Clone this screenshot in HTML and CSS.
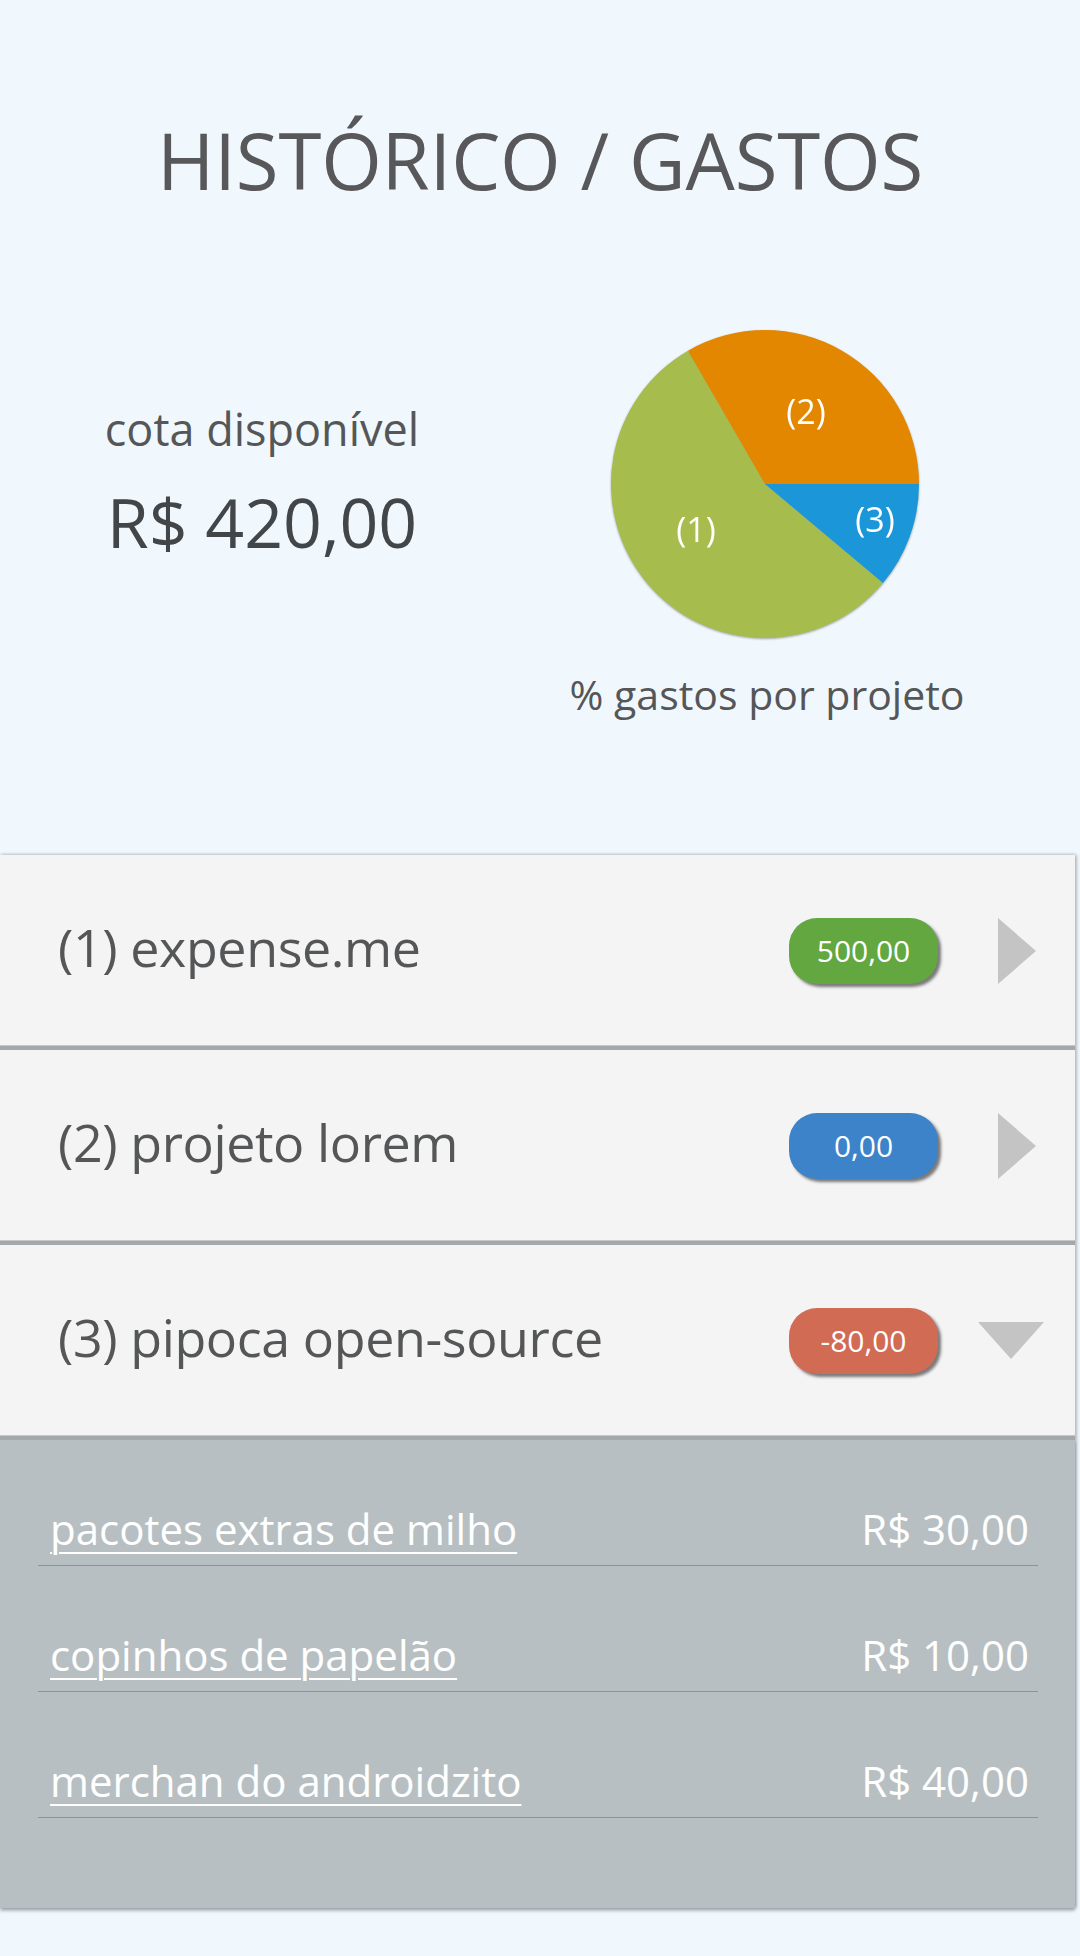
FILE: index.html
```html
<!DOCTYPE html>
<html lang="pt">
<head>
<meta charset="utf-8">
<title>Histórico / Gastos</title>
<link rel="stylesheet" href="styles.css">
</head>
<body>
<div class="page">
  <header class="header">
    <h1 class="title">HISTÓRICO / GASTOS</h1>
  </header>

  <section class="summary">
    <div class="quota">
      <div class="quota-label">cota disponível</div>
      <div class="quota-value">R$ 420,00</div>
    </div>
    <div class="chart">
      <svg class="pie" width="310" height="310" viewBox="0 0 310 310">
        <path class="slice-green" d="M155,155 L272.97,253.99 A154,154 0 1 1 78,21.63 Z"/>
        <path class="slice-orange" d="M155,155 L78,21.63 A154,154 0 0 1 309,155 Z"/>
        <path class="slice-blue" d="M155,155 L309,155 A154,154 0 0 1 272.97,253.99 Z"/>
        <text class="pie-label" x="196" y="95">(2)</text>
        <text class="pie-label" x="265" y="203">(3)</text>
        <text class="pie-label" x="86" y="213">(1)</text>
      </svg>
      <div class="chart-caption">% gastos por projeto</div>
    </div>
  </section>

  <section class="projects">
    <div class="project">
      <span class="project-name">(1) expense.me</span>
      <span class="badge badge-green">500,00</span>
      <span class="icon-box"><span class="tri-right"></span></span>
    </div>
    <div class="project">
      <span class="project-name">(2) projeto lorem</span>
      <span class="badge badge-blue">0,00</span>
      <span class="icon-box"><span class="tri-right"></span></span>
    </div>
    <div class="project">
      <span class="project-name">(3) pipoca open-source</span>
      <span class="badge badge-red">-80,00</span>
      <span class="icon-box"><span class="tri-down"></span></span>
    </div>
    <div class="details">
      <div class="detail-row">
        <a class="detail-name" href="#">pacotes extras de milho</a>
        <span class="detail-price">R$ 30,00</span>
      </div>
      <div class="detail-row">
        <a class="detail-name" href="#">copinhos de papelão</a>
        <span class="detail-price">R$ 10,00</span>
      </div>
      <div class="detail-row">
        <a class="detail-name" href="#">merchan do androidzito</a>
        <span class="detail-price">R$ 40,00</span>
      </div>
    </div>
  </section>
</div>
</body>
</html>
```

FILE: styles.css
```css
html, body {
  margin: 0;
  padding: 0;
}
body {
  background: #f0f8fe;
  font-family: "Open Sans", "Noto Sans", sans-serif;
  color: #555657;
}
.page {
  width: 1080px;
  height: 1956px;
  overflow: hidden;
}
.header {
  padding-top: 110px;
}
.title {
  margin: 0;
  text-align: center;
  font-size: 78px;
  line-height: 100px;
  font-weight: 400;
  letter-spacing: -0.2px;
  color: #58585a;
}
.summary {
  display: grid;
  grid-template-columns: 524px 1fr;
  height: 645px;
}
.quota {
  padding-top: 189px;
  text-align: center;
}
.quota-label {
  font-size: 45px;
  line-height: 60px;
  color: #555657;
}
.quota-value {
  margin-top: 23px;
  font-size: 68px;
  line-height: 80px;
  color: #434648;
}
.chart {
  padding-top: 119px;
  padding-right: 70px;
  display: flex;
  flex-direction: column;
  align-items: center;
}
.pie {
  display: block;
  margin-left: -4px;
  filter: drop-shadow(0 1px 1px rgba(60, 60, 40, 0.45));
}
.slice-green { fill: #a6bd4e; }
.slice-orange { fill: #e38600; }
.slice-blue { fill: #1b96d9; }
.pie-label {
  fill: #ffffff;
  font-family: "Open Sans", sans-serif;
  font-size: 34px;
  text-anchor: middle;
}
.chart-caption {
  margin-top: 27px;
  font-size: 41px;
  line-height: 56px;
  color: #555657;
}
.projects {
  width: 1075px;
  box-shadow: 2px 0 3px rgba(0, 0, 0, 0.22), 0 -1px 3px rgba(0, 0, 0, 0.12);
}
.project {
  display: flex;
  align-items: center;
  height: 191px;
  box-sizing: content-box;
  padding: 0 31px 0 58px;
  background: #f4f4f4;
  border-bottom: 4px solid #a3a8aa;
  box-shadow: inset 0 -1px 0 #c4c8ca;
}
.project-name {
  flex: 1;
  font-size: 52px;
  line-height: 70px;
  letter-spacing: -0.4px;
  color: #555657;
  padding-bottom: 8px;
}
.badge {
  width: 149px;
  height: 66px;
  border-radius: 28px;
  display: flex;
  align-items: center;
  justify-content: center;
  color: #ffffff;
  font-size: 30px;
  box-shadow: 3px 3px 3px rgba(0, 0, 0, 0.5);
}
.badge-green { background: #63a741; }
.badge-blue { background: #3c83c9; }
.badge-red { background: #d26b53; }
.icon-box {
  width: 67px;
  margin-left: 39px;
  display: flex;
  justify-content: center;
  align-items: center;
}
.tri-right {
  width: 0;
  height: 0;
  margin-left: 12px;
  border-top: 33px solid transparent;
  border-bottom: 33px solid transparent;
  border-left: 38px solid #c4c4c4;
}
.tri-down {
  width: 0;
  height: 0;
  border-left: 33px solid transparent;
  border-right: 33px solid transparent;
  border-top: 37px solid #c4c4c4;
}
.details {
  background: #b8bfc2;
  padding: 0 37px 90px 38px;
  box-shadow: 0 3px 3px rgba(0, 0, 0, 0.25);
}
.detail-row {
  display: flex;
  align-items: flex-end;
  justify-content: space-between;
  height: 126px;
  box-sizing: border-box;
  padding: 0 9px 11px 12px;
  border-bottom: 1px solid #8d9497;
}
.detail-name {
  color: #ffffff;
  font-size: 42px;
  line-height: 50px;
  text-decoration: underline;
  text-decoration-thickness: 2px;
  text-underline-offset: 7px;
}
.detail-price {
  color: #ffffff;
  font-size: 42px;
  line-height: 50px;
}
```
